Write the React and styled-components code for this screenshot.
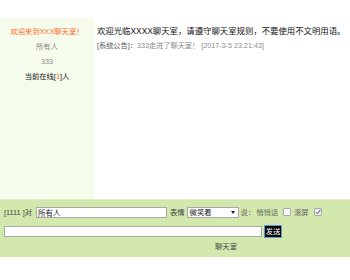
import React from 'react';
import styled, { createGlobalStyle } from 'styled-components';

const GlobalStyle = createGlobalStyle`
  html, body {
    margin: 0;
    padding: 0;
    background: #fff;
    font-family: "Liberation Sans", "Noto Sans CJK SC", sans-serif;
  }
`

export default function App() {
  // 底部表单的默认值
  const target = '所有人';
  const face = '微笑着';

  return (
    <>
      <GlobalStyle />
      <Page>
        <ChatArea>
          <Sidebar>
            <Title>欢迎来到XXX聊天室！</Title>
            <UserLine>所有人</UserLine>
            <UserLine>333</UserLine>
            <Online>当前在线[<em>1</em>]人</Online>
          </Sidebar>
          <Messages>
            <Welcome>欢迎光临XXXX聊天室，请遵守聊天室规则，不要使用不文明用语。</Welcome>
            <Notice>
              <b>[系统公告]：</b>333走进了聊天室！ [2017-3-5 23:21:43]
            </Notice>
          </Messages>
        </ChatArea>

        <Bar>
          <Row>
            <Label>[1111 ]对</Label>
            <TextBox $w={131} $ml={4} readOnly value={target} />
            <Label $ml={3}>表情</Label>
            <Select $ml={2}>
              <span>{face}</span>
              <Arrow />
            </Select>
            <Label $ml={2} $muted>说：</Label>
            <Label $ml={1} $muted>悄悄话</Label>
            <Check $ml={5} />
            <Label $ml={3} $muted>滚屏</Label>
            <Check $ml={5} $checked>
              <svg width="6" height="6" viewBox="0 0 6 6">
                <path d="M0.8 3.2 L2.4 4.8 L5.3 0.9" fill="none" stroke="#555" strokeWidth="1" />
              </svg>
            </Check>
          </Row>
          <Row $mt={7}>
            <TextBox $w={258} readOnly value="" />
            <SendButton>发送</SendButton>
          </Row>
          <RoomName>聊天室</RoomName>
        </Bar>
      </Page>
    </>
  );
}

const Page = styled.div`
  width: 350px;
  height: 280px;
  padding-top: 18px;
  box-sizing: border-box;
  display: flex;
  flex-direction: column;
`
const ChatArea = styled.div`
  display: flex;
  height: 181px;
`
const Sidebar = styled.div`
  width: 94px;
  background: #f5fcec;
  text-align: center;
  padding-top: 6px;
  font-size: 7.3px;
  line-height: 15px;
`
const Title = styled.div`
  color: #ff6a1f;
`
const UserLine = styled.div`
  color: #888;
`
const Online = styled.div`
  color: #111;
  em {
    font-style: normal;
    color: #ff6a1f;
  }
`
const Messages = styled.div`
  flex: 1;
  padding: 7px 0 0 3px;
`
const Welcome = styled.div`
  font-size: 8.4px;
  line-height: 13.5px;
  color: #111;
  white-space: nowrap;
`
const Notice = styled.div`
  font-size: 7.2px;
  line-height: 13.5px;
  color: #8a8a8a;
  white-space: nowrap;
  b {
    font-weight: normal;
    color: #555;
  }
`
const Bar = styled.div`
  height: 58px;
  box-sizing: border-box;
  background: #d3e8ac;
  border-top: 1px solid #e3efc8;
  padding: 6px 0 0 4px;
`
const Row = styled.div`
  display: flex;
  align-items: center;
  height: 12px;
  margin-top: ${(p) => p.$mt || 0}px;
`
const Label = styled.span`
  font-size: 7.3px;
  white-space: nowrap;
  color: ${(p) => (p.$muted ? '#666' : '#444')};
  margin-left: ${(p) => p.$ml || 0}px;
`
const TextBox = styled.input`
  width: ${(p) => p.$w}px;
  height: 11px;
  box-sizing: border-box;
  margin: 0 0 0 ${(p) => p.$ml || 0}px;
  padding: 0 1px;
  border: 1px solid #a8a8a8;
  background: #fff;
  font-family: "Liberation Sans", "Noto Sans CJK SC", sans-serif;
  font-size: 7.5px;
  color: #222;
  outline: none;
`
const Select = styled.div`
  width: 52px;
  height: 11px;
  box-sizing: border-box;
  margin-left: ${(p) => p.$ml || 0}px;
  padding: 0 3px 0 2px;
  border: 1px solid #a8a8a8;
  background: #fff;
  display: flex;
  align-items: center;
  justify-content: space-between;
  font-size: 7.3px;
  color: #222;
`
const Arrow = styled.i`
  width: 0;
  height: 0;
  border-left: 2px solid transparent;
  border-right: 2px solid transparent;
  border-top: 3px solid #222;
`
const Check = styled.span`
  width: 8px;
  height: 8px;
  box-sizing: border-box;
  margin-left: ${(p) => p.$ml || 0}px;
  border: 1px solid #aaa;
  border-radius: 1px;
  background: ${(p) => (p.$checked ? '#eee' : '#fbfbfb')};
  display: flex;
  align-items: center;
  justify-content: center;
`
const SendButton = styled.button`
  margin-left: 2px;
  width: 18px;
  height: 13px;
  padding: 0;
  box-sizing: border-box;
  border: 1px solid #5b9bd5;
  background: #000;
  color: #fff;
  font-family: "Liberation Sans", "Noto Sans CJK SC", sans-serif;
  font-size: 7.3px;
  line-height: 11px;
`
const RoomName = styled.div`
  margin-top: 4px;
  padding-left: 210px;
  width: 24px;
  text-align: center;
  font-size: 7.3px;
  line-height: 12px;
  color: #444;
`
